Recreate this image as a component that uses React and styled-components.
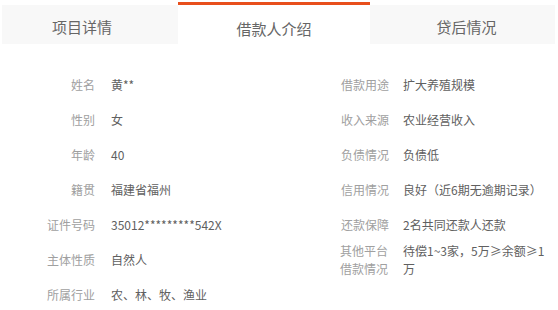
import styled, { createGlobalStyle } from "styled-components";

const GlobalStyle = createGlobalStyle`
  body {
    margin: 0;
    background: #fff;
    font-family: "Microsoft YaHei", "Noto Sans CJK SC", sans-serif;
  }
`;

const leftRows = [
  ["姓名", "黄**"],
  ["性别", "女"],
  ["年龄", "40"],
  ["籍贯", "福建省福州"],
  ["证件号码", "35012*********542X"],
  ["主体性质", "自然人"],
  ["所属行业", "农、林、牧、渔业"],
];

const rightRows = [
  ["借款用途", "扩大养殖规模"],
  ["收入来源", "农业经营收入"],
  ["负债情况", "负债低"],
  ["信用情况", "良好（近6期无逾期记录）"],
  ["还款保障", "2名共同还款人还款"],
  ["其他平台借款情况", "待偿1~3家，5万≥余额≥1万"],
];

const tabs = [
  { name: "项目详情", width: 176, shift: -8 },
  { name: "借款人介绍", width: 192, active: true, shift: 0 },
  { name: "贷后情况", width: 185, shift: 4 },
];

const App = () => {
  return (
    <>
      <GlobalStyle />
      <Page>
        <TabBar>
          {tabs.map((t) => (
            <Tab key={t.name} $active={t.active} $width={t.width} $shift={t.shift}>
              {t.name}
            </Tab>
          ))}
        </TabBar>
        <Details>
          <Column>
            {leftRows.map(([label, value]) => (
              <Row key={label} $labelWidth={95} $gap={16}>
                <Label>{label}</Label>
                <Value>{value}</Value>
              </Row>
            ))}
          </Column>
          <Column>
            {rightRows.map(([label, value]) => (
              <Row key={label} $labelWidth={109} $gap={14}>
                <Label $narrow={label.length > 4}>{label}</Label>
                <Value $narrow>{value}</Value>
              </Row>
            ))}
          </Column>
        </Details>
      </Page>
    </>
  );
};

export default App;

const Page = styled.div`
  width: 558px;
`;

const TabBar = styled.div`
  display: flex;
  padding: 2px 3px 0 2px;
  height: 42px;
`;

const Tab = styled.div`
  width: ${(p) => p.$width}px;
  box-sizing: border-box;
  display: flex;
  align-items: center;
  justify-content: center;
  font-size: 15px;
  color: #666;
  background: ${(p) => (p.$active ? "#fff" : "#f8f8f8")};
  border-top: 3px solid ${(p) => (p.$active ? "#e84f1c" : "#fff")};
  padding-top: ${(p) => (p.$active ? 7 : 4)}px;
  padding-left: ${(p) => Math.max(p.$shift, 0) * 2}px;
  padding-right: ${(p) => Math.max(-p.$shift, 0) * 2}px;
`;

const Details = styled.div`
  display: grid;
  grid-template-columns: 280px 278px;
  padding-top: 23px;
`;

const Column = styled.div`
  display: flex;
  flex-direction: column;
`;

const Row = styled.div`
  display: grid;
  grid-template-columns: ${(p) => p.$labelWidth}px 1fr;
  column-gap: ${(p) => p.$gap}px;
  align-items: center;
  height: 35px;
  font-size: 12px;
  line-height: 18px;
`;

const Label = styled.div`
  color: #a0a0a0;
  justify-self: end;
  width: ${(p) => (p.$narrow ? "49px" : "auto")};
  text-align: ${(p) => (p.$narrow ? "left" : "right")};
`;

const Value = styled.div`
  color: #606060;
  max-width: ${(p) => (p.$narrow ? "148px" : "none")};
`;
